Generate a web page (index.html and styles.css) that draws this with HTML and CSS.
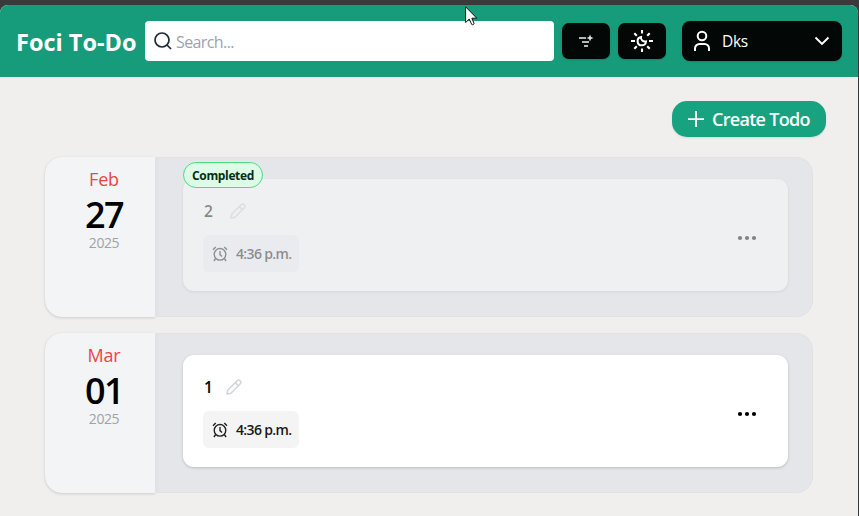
FILE: index.html
```html
<!DOCTYPE html>
<html lang="en">
<head>
<meta charset="utf-8">
<title>Foci To-Do</title>
<link rel="stylesheet" href="styles.css">
</head>
<body>
<div class="app">
  <header class="topbar">
    <h1 class="brand">Foci To-Do</h1>
    <div class="search">
      <svg width="18" height="18" viewBox="0 0 18 18" fill="none" stroke="#1f2937" stroke-width="1.7"><circle cx="8" cy="8" r="7"/><path d="M13 13l4 4"/></svg>
      <span class="placeholder">Search...</span>
    </div>
    <button class="icon-btn" aria-label="Filter">
      <svg width="16" height="16" viewBox="0 0 16 16" fill="none" stroke="#b4b8b7" stroke-width="1.8"><path d="M1 5h7M4 9h7M6 13h4"/><path d="M12 1.500l1 2.500 2.500 1-2.500 1L12 8.500l-1-2.500L8.500 5l2.500-1z" fill="#e1e4e3" stroke="none"/></svg>
    </button>
    <button class="icon-btn" aria-label="Theme">
      <svg width="24" height="24" viewBox="0 0 24 24" fill="none" stroke="#fff" stroke-width="2.100"><path d="M12 1v3.500M12 19.500V23M1 12h4M19 12h4M4.300 4.300l2.500 2.500M17.200 17.200l2.500 2.500M4.300 19.700l2.500-2.500M17.200 6.800l2.500-2.500"/><path d="M11 8c-.4 3 2 5 5 4.500A4.200 4.200 0 1 1 11 8z" stroke-width="2"/></svg>
    </button>
    <button class="user">
      <svg width="18" height="22" viewBox="0 0 18 22" fill="none" stroke="#fff" stroke-width="2"><circle cx="9" cy="6" r="4.300"/><path d="M2 21v-2.500a4.500 4.500 0 0 1 4.500-4.500h5a4.500 4.500 0 0 1 4.500 4.500V21"/></svg>
      <span class="user-name">Dks</span>
      <svg width="16" height="10" viewBox="0 0 16 10" fill="none" stroke="#fff" stroke-width="1.900"><path d="M1.500 1.500L8 8l6.500-6.500"/></svg>
    </button>
  </header>
  <main>
    <div class="actions">
      <button class="create">
        <svg width="16" height="16" viewBox="0 0 16 16" stroke="#fff" stroke-width="1.800"><path d="M8.100 0v16M0 8.100h16"/></svg>
        <span class="create-label">Create Todo</span>
      </button>
    </div>
    <section class="day">
      <div class="date"><span class="month">Feb</span><span class="num">27</span><span class="year">2025</span></div>
      <div class="tasks">
        <span class="badge"><span>Completed</span></span>
        <article class="task done">
          <div class="info">
            <div class="name-row"><span class="name">2</span>
              <svg class="pencil" width="16" height="16" viewBox="0 0 16 16" fill="none" stroke="#d1d5db" stroke-width="1.500" stroke-linejoin="round"><path d="M1 15l.8-4L11.200 1.700a2.200 2.200 0 0 1 3.100 3.100L5 14.200zM9.300 3.600l3.100 3.100"/></svg></div>
            <div class="time">
              <svg width="16" height="16" viewBox="0 0 16 16" fill="none" stroke="#222" stroke-width="1.400"><circle cx="8" cy="8.300" r="5.800"/><path d="M8 5v3.600l2 2M1 3.700L3.700 1M12.300 1L15 3.700M3.700 12.500L1.900 15M12.300 12.500l1.800 2.500"/></svg>
              <span class="clock">4:36 p.m.</span></div>
          </div>
          <svg class="dots" width="20" height="6" viewBox="0 0 20 6"><circle cx="3" cy="3" r="2.100"/><circle cx="10" cy="3" r="2.100"/><circle cx="17" cy="3" r="2.100"/></svg>
        </article>
      </div>
    </section>
    <section class="day">
      <div class="date"><span class="month">Mar</span><span class="num">01</span><span class="year">2025</span></div>
      <div class="tasks">
        <article class="task">
          <div class="info">
            <div class="name-row"><span class="name one">1</span>
              <svg class="pencil" width="16" height="16" viewBox="0 0 16 16" fill="none" stroke="#d1d5db" stroke-width="1.500" stroke-linejoin="round"><path d="M1 15l.8-4L11.200 1.700a2.200 2.200 0 0 1 3.100 3.100L5 14.200zM9.300 3.600l3.100 3.100"/></svg></div>
            <div class="time">
              <svg width="16" height="16" viewBox="0 0 16 16" fill="none" stroke="#222" stroke-width="1.400"><circle cx="8" cy="8.300" r="5.800"/><path d="M8 5v3.600l2 2M1 3.700L3.700 1M12.300 1L15 3.700M3.700 12.500L1.900 15M12.300 12.500l1.800 2.500"/></svg>
              <span class="clock">4:36 p.m.</span></div>
          </div>
          <svg class="dots" width="20" height="6" viewBox="0 0 20 6"><circle cx="3" cy="3" r="2.100"/><circle cx="10" cy="3" r="2.100"/><circle cx="17" cy="3" r="2.100"/></svg>
        </article>
      </div>
    </section>
  </main>
</div>
<svg class="cursor" width="13" height="20" viewBox="0 0 13 20" fill="#fff" stroke="#111" stroke-width="1"><path d="M.6.8v15.700l3.600-3.400 2.500 5.300c1 .8 2.600 0 2.300-1.200L6.800 12.200h5z"/></svg>
</body>
</html>
```

FILE: styles.css
```css
* { box-sizing: border-box; }
body {
  margin: 0;
  height: 516px;
  overflow: hidden;
  padding: 5px 1px 0 0;
  background: #3a3a3a;
  font-family: "Open Sans", "Noto Sans", sans-serif;
  color: #030706;
}
svg { display: block; flex: none; }
button { border: 0; margin: 0; font: inherit; color: inherit; }
.app {
  height: 511px;
  background: #f0efed;
  border-radius: 8px 8px 0 0;
  overflow: hidden;
}
.topbar {
  height: 72px;
  background: #179c7b;
  display: flex;
  align-items: center;
  padding: 0 16px;
}
.brand {
  margin: 0;
  width: 129px;
  font-size: 23.5px;
  line-height: 32px;
  font-weight: 700;
  letter-spacing: 0;
  color: #fff;
  white-space: nowrap;
  padding-top: 2px;
}
.search {
  flex: 1;
  height: 40px;
  background: #fff;
  border-radius: 4px;
  display: flex;
  align-items: center;
  padding-left: 9px;
  gap: 4px;
}
.placeholder { font-size: 16px; letter-spacing: -0.6px; color: #9ca3af; padding-top: 2px; }
.icon-btn {
  width: 48px;
  height: 36px;
  margin-left: 8px;
  padding: 0;
  background: #030706;
  border-radius: 7px;
  display: flex;
  align-items: center;
  justify-content: center;
  box-shadow: 0 1px 2px rgba(0,0,0,.15);
}
.user {
  width: 160px;
  height: 40px;
  margin-left: 16px;
  padding: 0 12px 0 11px;
  background: #030706;
  border-radius: 8px;
  display: flex;
  align-items: center;
  color: #fff;
  box-shadow: 0 1px 2px rgba(0,0,0,.15);
}
.user-name { flex: 1; text-align: left; margin-left: 11px; font-size: 15.5px; letter-spacing: -0.35px; }
.actions { display: flex; justify-content: flex-end; padding: 24px 32px 20px; }
.create {
  width: 154px;
  height: 36px;
  padding: 0 16px;
  background: #18a380;
  border-radius: 15px;
  display: flex;
  align-items: center;
  gap: 8px;
  color: #fff;
  box-shadow: 0 1px 2px rgba(0,0,0,.1);
}
.create-label { font-size: 18px; font-weight: 600; letter-spacing: -0.7px; white-space: nowrap; }
.day {
  height: 160px;
  width: 768px;
  margin: 0 0 16px 45px;
  display: flex;
  background: #e5e6ea;
  border-radius: 17px;
  box-shadow: inset 0 0 0 1px #e2e2e5;
}
.date {
  width: 110px;
  background: #f3f4f6;
  border-radius: 17px 0 0 17px;
  box-shadow: 0 1px 3px rgba(0,0,0,.14);
  display: flex;
  flex-direction: column;
  align-items: center;
  padding: 8px 0 0 8px;
}
.month { font-size: 18px; line-height: 28px; color: #ef4444; letter-spacing: -0.2px; }
.num { font-size: 36px; line-height: 40px; padding-top: 2px; margin-bottom: -2px; font-weight: 600; letter-spacing: -1.5px; color: #000; }
.year { font-size: 14px; line-height: 20px; letter-spacing: -0.4px; color: #9ca3af; }
.tasks { flex: 1; position: relative; padding: 22px 25px 26px 24px; border-left: 4px solid #e2e3e6; }
.task {
  height: 112px;
  background: #fff;
  border-radius: 11px;
  box-shadow: 0 1px 3px rgba(0,0,0,.18);
  display: flex;
  align-items: center;
  justify-content: space-between;
  padding: 0 31px 0 21px;
}
.done { background: #eff0f2; box-shadow: 0 1px 3px rgba(0,0,0,.08); }
.done .name, .done .clock, .done .time svg, .done .dots { opacity: .45; }
.done .pencil { opacity: .65; }
.done .time { background: #eaebee; }
.dots { margin-top: 6px; }
.info { height: 112px; padding-top: 20px; }
.name-row { height: 24px; display: flex; align-items: center; gap: 17px; }
.name { font-size: 15.5px; font-weight: 600; width: 9px; }
.one { width: 5px; }
.time {
  width: 96px;
  height: 37px;
  margin: 12px 0 0 -1px;
  padding-left: 9px;
  background: #f4f4f4;
  border-radius: 6px;
  display: flex;
  align-items: center;
  gap: 8px;
}
.clock { font-size: 14px; font-weight: 600; letter-spacing: -0.65px; white-space: nowrap; color: #18181b; margin-top: -1px; }
.badge {
  position: absolute;
  left: 24px;
  top: 5px;
  width: 80px;
  height: 26px;
  z-index: 1;
  display: flex;
  align-items: center;
  justify-content: center;
  background: #dcfce7;
  border: 1px solid #4ade80;
  border-radius: 13px;
  font-size: 12px;
  font-weight: 700;
  letter-spacing: -0.35px;
  color: #052e16;
}
.cursor { position: absolute; left: 465px; top: 6px; }
```
